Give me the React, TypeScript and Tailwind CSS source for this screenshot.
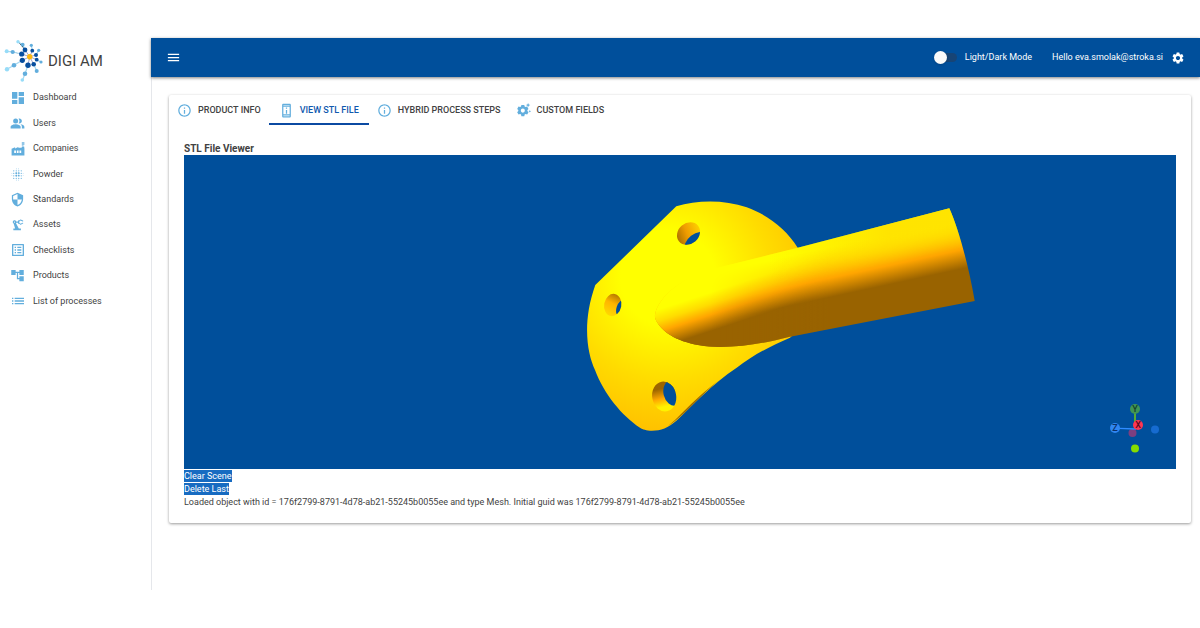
import type { ReactNode } from 'react';
import {
  MdAccountTree,
  MdBlurOn,
  MdDashboard,
  MdList,
  MdMenu,
  MdOutlineInfo,
  MdOutlineListAlt,
  MdOutlinePermDeviceInformation,
  MdPeopleAlt,
  MdPrecisionManufacturing,
  MdSecurity,
  MdSettings,
} from 'react-icons/md';

type NavItem = { label: string; icon: ReactNode };
type Tab = { label: string; icon: ReactNode; active?: boolean };

const OBJECT_ID = '176f2799-8791-4d78-ab21-55245b0055ee';

function FactoryIcon() {
  return (
    <svg viewBox="0 0 24 24" width="14" height="14" fill="currentColor" aria-hidden>
      <path d="M18.500 0h4.500v5h-1.500v1.500H18.500z" opacity="0.700" />
      <path
        fillRule="evenodd"
        d="M1 23V11.500l6-2.500v2l5.500-2.500V10h5.700l.6-2.500h3.700L23 11v12zM5.500 14.500v4.500h3v-4.500zm4.500 0v4.500h3v-4.500zm4.500 0v4.500h3v-4.500z"
      />
    </svg>
  );
}

function GearSparkIcon() {
  return (
    <svg viewBox="0 0 24 24" width="14" height="14" fill="currentColor" aria-hidden>
      <path
        fillRule="evenodd"
        d="M7.500 3.500h5l.6 2.600 1.600.9 2.700-.8 2.300 3.900-1.900 1.900v1.900l1.900 1.900-2.300 3.900-2.700-.8-1.600.9L12.500 22.500h-5l-.6-2.700-1.600-.9-2.700.8L.3 15.800l1.900-1.900V12L.3 10.100l2.300-3.900 2.700.8 1.600-.9zM10 9.500a3.500 3.500 0 1 0 0 7 3.500 3.500 0 0 0 0-7z"
      />
      <path d="M19 0l1.200 2.400 2.600 1.200-2.600 1.200L19 7.200l-1.200-2.400-2.600-1.200 2.600-1.200z" />
      <path d="M22 12l.8 1.500 1.200.7-1.200.7-.8 1.500-.8-1.500-1.500-.7 1.500-.7z" />
    </svg>
  );
}

const navItems: NavItem[] = [
  { label: 'Dashboard', icon: <MdDashboard size={16} /> },
  { label: 'Users', icon: <MdPeopleAlt size={15} /> },
  { label: 'Companies', icon: <FactoryIcon /> },
  { label: 'Powder', icon: <MdBlurOn size={15} /> },
  { label: 'Standards', icon: <MdSecurity size={15} /> },
  { label: 'Assets', icon: <MdPrecisionManufacturing size={14} /> },
  { label: 'Checklists', icon: <MdOutlineListAlt size={16} /> },
  { label: 'Products', icon: <MdAccountTree size={15} /> },
  { label: 'List of processes', icon: <MdList size={16} /> },
];

const tabs: Tab[] = [
  { label: 'Product info', icon: <MdOutlineInfo size={15} /> },
  { label: 'View STL file', icon: <MdOutlinePermDeviceInformation size={15} />, active: true },
  { label: 'Hybrid process steps', icon: <MdOutlineInfo size={15} /> },
  { label: 'Custom fields', icon: <GearSparkIcon /> },
];

function Logo() {
  return (
    <svg viewBox="4 39 40 42" width="40" height="42" aria-hidden>
      <g stroke="#8a8dc0" strokeWidth="0.8">
        <path d="M29.700 55.700 25 49M29.700 55.700l2.600-6M29.700 55.700l-8-2.700M29.700 55.700 36 54M29.700 55.700l-7.400 3.600M29.700 55.700 28 64.300M29.700 55.700l4 7.600M29.700 55.700l7 3" />
      </g>
      <g stroke="#a5d8f2" strokeWidth="1.200">
        <path d="M25 49l-2.300-5.300L18 40.700M32.300 49.700l-1-5.400M21.700 53l-9-2-6-.7M36 54l2.700-4.700M22.300 59.300l-8.300 5-7 4M28 64.300l-3 8.400-2.700 7M33.700 63.300l3 6.700M36.700 58.700l4.300 2.300" />
      </g>
      <g fill="#084f9f">
        <circle cx="25" cy="49" r="2.400" />
        <circle cx="32.300" cy="49.700" r="1.900" />
        <circle cx="21.700" cy="53" r="2.600" />
        <circle cx="36" cy="54" r="2" />
        <circle cx="22.300" cy="59.300" r="2.600" />
        <circle cx="28" cy="64.300" r="2.700" />
        <circle cx="33.700" cy="63.300" r="2.300" />
        <circle cx="36.700" cy="58.700" r="1.900" />
      </g>
      <g fill="#62aedd">
        <circle cx="22.700" cy="43.700" r="1.900" />
        <circle cx="31.300" cy="44.300" r="1.600" />
        <circle cx="12.700" cy="51" r="2.100" />
        <circle cx="38.700" cy="49.300" r="1.600" />
        <circle cx="14" cy="64.300" r="2.300" />
        <circle cx="25" cy="72.700" r="2.300" />
        <circle cx="36.700" cy="70" r="2" />
        <circle cx="41" cy="61" r="1.600" />
      </g>
      <g fill="#97dcf8">
        <circle cx="18" cy="40.700" r="1.700" />
        <circle cx="6.700" cy="50.300" r="2" />
        <circle cx="7" cy="68.300" r="2.200" />
        <circle cx="22.300" cy="79" r="1.800" />
      </g>
      <circle cx="29.700" cy="55.700" r="2.700" fill="#fdb913" />
    </svg>
  );
}

function AxisGizmo() {
  return (
    <g fontFamily="Roboto, sans-serif" fontSize="9" fontWeight="500" textAnchor="middle">
      <circle cx="1155" cy="429.500" r="4" fill="#166bd0" />
      <circle cx="1132.500" cy="433" r="4" fill="#7b3f80" />
      <circle cx="1135" cy="448.500" r="4" fill="#86dc00" />
      <path d="M1135 428v-15" stroke="#86dc00" strokeWidth="1.300" />
      <path d="M1136 429l-17-.6" stroke="#2f8cff" strokeWidth="1.300" />
      <circle cx="1135" cy="409" r="5" fill="#3f9455" />
      <circle cx="1138" cy="425" r="5" fill="#ff3653" />
      <circle cx="1115" cy="428" r="5" fill="#2f86f2" />
      <text x="1135" y="412" fill="#12402a">Y</text>
      <text x="1138" y="428" fill="#5b0a1c">X</text>
      <text x="1115" y="431" fill="#0a2f66">Z</text>
    </g>
  );
}

const TUBE =
  'M655 315C658 296 685 275 716.700 268L797.700 247.700 949.300 208.300C958 228 968 262 974.700 301L790 336.700C765 343 745 347 720 347C690 346.500 671 338 662 328.500C657 323 654.500 319 655 315Z';

function StlModel() {
  return (
    <svg
      viewBox="184 155 992 314"
      className="block h-auto w-full bg-[#004f9b]"
      role="img"
      aria-label="STL model"
    >
      <defs>
        <radialGradient id="plate" gradientUnits="userSpaceOnUse" cx="668" cy="278" r="158">
          <stop offset="0.300" stopColor="#ffff00" />
          <stop offset="0.650" stopColor="#ffdc00" />
          <stop offset="1" stopColor="#ffbf00" />
        </radialGradient>
        <linearGradient id="tube" gradientUnits="userSpaceOnUse" x1="780" y1="258" x2="790.300" y2="305.800">
          <stop offset="0" stopColor="#ffff00" />
          <stop offset="0.300" stopColor="#ffd800" />
          <stop offset="0.620" stopColor="#ffa500" />
          <stop offset="1" stopColor="#996300" />
        </linearGradient>
        <linearGradient id="tubeNear" gradientUnits="userSpaceOnUse" x1="730" y1="286" x2="741.500" y2="321">
          <stop offset="0" stopColor="#ffff00" />
          <stop offset="0.300" stopColor="#ffdc00" />
          <stop offset="0.580" stopColor="#ffa500" />
          <stop offset="1" stopColor="#996300" />
        </linearGradient>
        <linearGradient id="nearFade" gradientUnits="userSpaceOnUse" x1="710" y1="0" x2="830" y2="0">
          <stop offset="0" stopColor="#fff" />
          <stop offset="1" stopColor="#000" />
        </linearGradient>
        <mask id="near" maskUnits="userSpaceOnUse" x="640" y="190" width="350" height="170">
          <rect x="640" y="190" width="350" height="170" fill="url(#nearFade)" />
        </mask>
        <linearGradient id="far" gradientUnits="userSpaceOnUse" x1="770" y1="0" x2="890" y2="0">
          <stop offset="0" stopColor="#ffd800" stopOpacity="0" />
          <stop offset="1" stopColor="#ffd800" stopOpacity="0.700" />
        </linearGradient>
        <linearGradient id="fade" gradientUnits="userSpaceOnUse" x1="780" y1="258" x2="786" y2="286">
          <stop offset="0" stopColor="#fff" />
          <stop offset="1" stopColor="#000" />
        </linearGradient>
        <mask id="upper" maskUnits="userSpaceOnUse" x="640" y="190" width="350" height="170">
          <rect x="640" y="190" width="350" height="170" fill="url(#fade)" />
        </mask>
        <linearGradient id="holeTop" x1="0" y1="0.700" x2="1" y2="0.300">
          <stop offset="0" stopColor="#a06800" />
          <stop offset="0.450" stopColor="#f09c00" />
          <stop offset="1" stopColor="#ffd800" />
        </linearGradient>
        <linearGradient id="holeMid" x1="0.700" y1="0" x2="0.300" y2="1">
          <stop offset="0" stopColor="#a06800" />
          <stop offset="0.450" stopColor="#ffb400" />
          <stop offset="1" stopColor="#ffe000" />
        </linearGradient>
        <linearGradient id="holeLow" x1="0.400" y1="0" x2="0.600" y2="1">
          <stop offset="0.250" stopColor="#9c6500" />
          <stop offset="0.550" stopColor="#ffa800" />
          <stop offset="0.800" stopColor="#fff200" />
        </linearGradient>
        <clipPath id="clipTop">
          <ellipse cx="688.500" cy="233.500" rx="12.300" ry="10.300" transform="rotate(-40 688.500 233.500)" />
        </clipPath>
        <clipPath id="clipMid">
          <ellipse cx="612.700" cy="305" rx="8.600" ry="11.200" transform="rotate(10 612.700 305)" />
        </clipPath>
        <clipPath id="clipLow">
          <ellipse cx="664.200" cy="396.500" rx="12" ry="15" transform="rotate(-10 664.200 396.500)" />
        </clipPath>
      </defs>

      <path
        d="M676.300 206.300C697 200 724 199.500 746.700 207.300C768 215 786 229 797.700 247.700L830 300 790 337.700C770 346 752 356 736.700 367.700C712 384 693 405 676.700 420.500C668 428 661 430.700 652 430.700C646 430.500 643 429.500 640 427.700C622 416 604 394 595 370C587 353 582 322 595.300 285Z"
        fill="url(#plate)"
      />
      <path
        d="M722 378C704 391 690 405 675 420L668 426C684 416 701 394 722 378Z"
        fill="#9c6800"
      />

      <g clipPath="url(#clipTop)">
        <rect x="675" y="220" width="27" height="27" fill="url(#holeTop)" />
        <ellipse cx="696" cy="242" rx="13" ry="8" transform="rotate(-38 696 242)" fill="#004f9b" />
      </g>
      <g clipPath="url(#clipMid)">
        <rect x="602" y="292" width="22" height="26" fill="url(#holeMid)" />
        <ellipse cx="622" cy="308.500" rx="5.500" ry="9" transform="rotate(18 622 308.500)" fill="#004f9b" />
      </g>
      <g clipPath="url(#clipLow)">
        <rect x="650" y="380" width="28" height="33" fill="url(#holeLow)" />
        <ellipse cx="673" cy="393" rx="9.500" ry="13" transform="rotate(-14 673 393)" fill="#004f9b" />
      </g>

      <path d={TUBE} fill="url(#tube)" />
      <path d={TUBE} fill="url(#tubeNear)" mask="url(#near)" />
      <path d={TUBE} fill="url(#far)" mask="url(#upper)" />
      <AxisGizmo />
    </svg>
  );
}

function Sidebar() {
  return (
    <aside className="w-[152px] shrink-0 border-r border-gray-200">
      <a href="#home" className="flex items-center gap-1 pt-[2px] pl-1 text-[15px] leading-5">
        <Logo />
        <span>DIGI AM</span>
      </a>
      <nav aria-label="Main" className="pt-[3px]">
        <ul className="grid h-[229px] auto-rows-fr">
          {navItems.map((item) => (
            <li key={item.label} className="flex">
              <a href="#nav" className="flex flex-1 items-center gap-[7px] pl-[9px]">
                <span className="flex w-[17px] justify-center text-[#62aedd]">{item.icon}</span>
                {item.label}
              </a>
            </li>
          ))}
        </ul>
      </nav>
    </aside>
  );
}

function TopBar() {
  return (
    <header className="flex h-[39px] items-center bg-[#004f9b] px-[15px] text-white shadow-[0_1px_3px_rgba(0,0,0,0.5)]">
      <button type="button" aria-label="Toggle menu">
        <MdMenu size={15} />
      </button>
      <label className="ml-auto flex items-center gap-2">
        <input
          type="checkbox"
          role="switch"
          className="relative h-[9px] w-6 appearance-none before:absolute before:inset-y-0 before:right-0 before:w-5 before:rounded-full before:bg-[#174475] after:absolute after:-top-[2px] after:left-[1px] after:size-[13px] after:rounded-full after:bg-[#fafafa] after:shadow"
        />
        Light/Dark Mode
      </label>
      <span className="mr-2 ml-5">Hello eva.smolak@stroka.si</span>
      <button type="button" aria-label="Settings">
        <MdSettings size={14} />
      </button>
    </header>
  );
}

export default function App() {
  return (
    <div className="flex min-h-screen bg-white py-[38px] font-[Roboto,sans-serif] text-[9px] leading-[13px] text-[#424242]">
      <div className="flex min-w-0 flex-1">
        <Sidebar />
        <div className="-ml-px min-w-0 flex-1">
          <TopBar />
          <main className="pt-[18px] pr-[9px] pl-[18px]">
            <section className="rounded-xs bg-white shadow-[0_1px_3px_rgba(0,0,0,0.4)]">
              <div role="tablist" className="flex">
                {tabs.map(({ label, icon, active }) => (
                  <button
                    key={label}
                    type="button"
                    role="tab"
                    aria-selected={Boolean(active)}
                    className={`flex h-[30px] items-center gap-[6px] border-b-2 pt-[2px] font-medium uppercase ${
                      active ? 'border-[#0b4aa2] px-[10px] text-[#0f59ae]' : 'border-transparent px-2'
                    }`}
                  >
                    <span className="text-[#62aedd]">{icon}</span>
                    {label}
                  </button>
                ))}
              </div>
              <div className="px-[15px] pt-[17px] pb-[14px]">
                <h2 className="text-[10px] leading-[13px] font-bold">STL File Viewer</h2>
                <StlModel />
                <div className="flex flex-col items-start gap-px py-px text-white">
                  <button type="button" className="bg-[#176bc1] leading-3">
                    Clear Scene
                  </button>
                  <button type="button" className="bg-[#176bc1] leading-3">
                    Delete Last
                  </button>
                </div>
                <p>
                  Loaded object with id = {OBJECT_ID} and type Mesh. Initial guid was {OBJECT_ID}
                </p>
              </div>
            </section>
          </main>
        </div>
      </div>
    </div>
  );
}
